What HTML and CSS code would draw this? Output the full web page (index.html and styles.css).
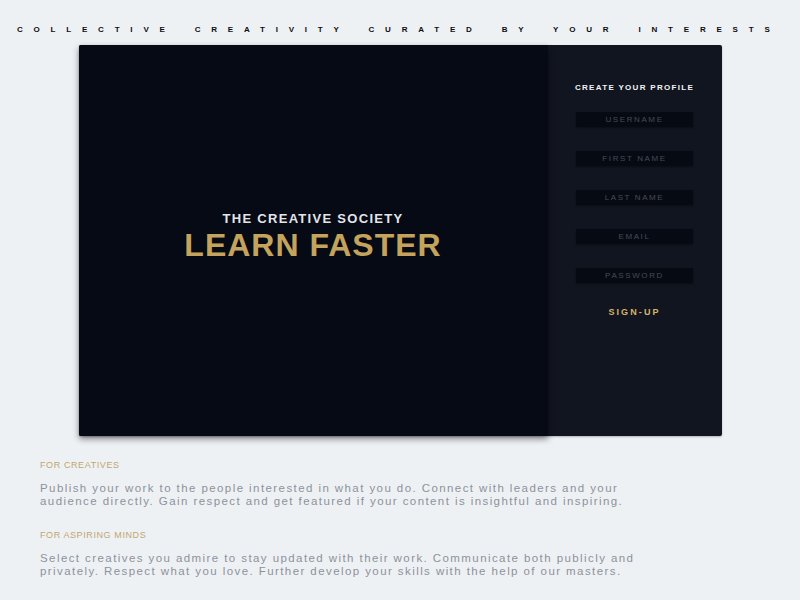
FILE: index.html
```html
<!DOCTYPE html>
<html lang="en">

<head>
    <meta charset="UTF-8">
    <meta name="viewport" content="width=device-width, initial-scale=1.0">
    <title>The Creative Society</title>
    <link rel="stylesheet" href="styles.css">
</head>

<body>

    <div class="tagline">Collective creativity curated by your interests</div>

    <div class="card">
        <div class="hero">
            <div class="heroSub">The Creative Society</div>
            <div class="heroTitle">Learn Faster</div>
        </div>
        <div class="signup">
            <div class="signupTitle">Create your profile</div>
            <input class="field" type="text" placeholder="USERNAME">
            <input class="field" type="text" placeholder="FIRST NAME">
            <input class="field" type="text" placeholder="LAST NAME">
            <input class="field" type="email" placeholder="EMAIL">
            <input class="field" type="password" placeholder="PASSWORD">
            <button class="signupButton">Sign-up</button>
        </div>
    </div>

    <div class="info">
        <div class="infoBlock">
            <div class="infoTitle">For creatives</div>
            <p class="infoText">Publish your work to the people interested in what you do. Connect with leaders and your audience directly. Gain respect and get featured if your content is insightful and inspiring.</p>
        </div>
        <div class="infoBlock">
            <div class="infoTitle">For aspiring minds</div>
            <p class="infoText">Select creatives you admire to stay updated with their work. Communicate both publicly and privately. Respect what you love. Further develop your skills with the help of our masters.</p>
        </div>
    </div>

</body>

</html>
```

FILE: styles.css
```css
body {
    margin: 0;
    background: #eef1f4;
    font-family: "Liberation Sans", Arial, sans-serif;
}

.tagline {
    padding-top: 25px;
    padding-left: 17px;
    font-size: 8px;
    line-height: 10px;
    font-weight: bold;
    text-transform: uppercase;
    letter-spacing: 10.8px;
    word-spacing: 6px;
    color: #0b0d12;
    white-space: nowrap;
}

.card {
    display: flex;
    width: 643px;
    height: 391px;
    margin: 10px auto 0;
    background: #11151f;
    border-radius: 2px;
    box-shadow: 0 1px 2px rgba(0, 0, 0, 0.25);
}

.hero {
    width: 469px;
    background: #050a14;
    border-radius: 2px 0 0 2px;
    box-shadow: 0 3px 6px rgba(0, 0, 0, 0.45);
    display: flex;
    flex-direction: column;
    align-items: center;
    justify-content: center;
    padding-bottom: 8px;
    box-sizing: border-box;
    position: relative;
    z-index: 1;
}

.heroSub {
    font-size: 13px;
    font-weight: bold;
    letter-spacing: 1.3px;
    text-transform: uppercase;
    color: #e3e5ea;
    line-height: 16px;
}

.heroTitle {
    font-size: 32px;
    font-weight: bold;
    letter-spacing: 1px;
    text-transform: uppercase;
    color: #c4a35c;
    line-height: 36px;
}

.signup {
    flex: 1;
    display: flex;
    flex-direction: column;
    align-items: center;
    padding-top: 38px;
}

.signupTitle {
    font-size: 8px;
    font-weight: bold;
    letter-spacing: 1.3px;
    text-transform: uppercase;
    color: #f2f3f5;
    line-height: 10px;
    margin-bottom: 19px;
}

.field {
    width: 117px;
    height: 15px;
    box-sizing: border-box;
    border: none;
    padding: 0;
    margin: 0 0 24px;
    background: #060a13;
    box-shadow: 0 1px 2px rgba(0, 0, 0, 0.4);
    font-family: inherit;
    font-size: 8px;
    letter-spacing: 1.6px;
    text-align: center;
    color: #c8ccd4;
}

.field::placeholder {
    color: #464b57;
}

.signupButton {
    margin-top: 0;
    border: none;
    background: none;
    padding: 0;
    font-family: inherit;
    font-size: 9px;
    font-weight: bold;
    letter-spacing: 2.1px;
    text-transform: uppercase;
    color: #d6b36c;
}

.info {
    padding: 23px 40px 0;
    width: 610px;
}

.infoBlock {
    margin-bottom: 21px;
}

.infoTitle {
    font-size: 9px;
    letter-spacing: 0.6px;
    text-transform: uppercase;
    color: #bea672;
    line-height: 12px;
}

.infoText {
    margin: 11px 0 0;
    font-size: 11.5px;
    letter-spacing: 1.42px;
    line-height: 13px;
    color: #8d929b;
}
```
